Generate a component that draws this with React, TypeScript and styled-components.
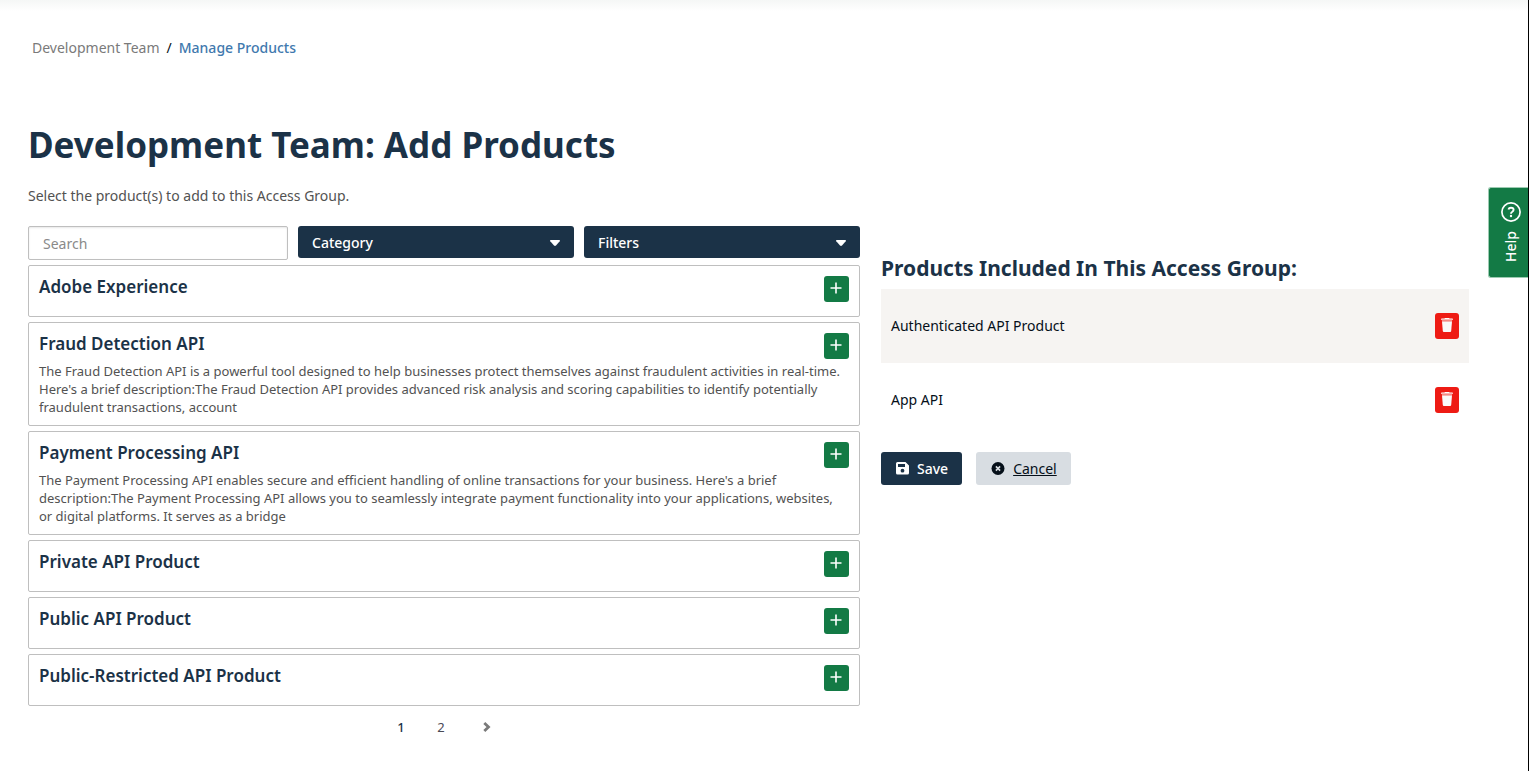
import React from "react";
import styled, { createGlobalStyle } from "styled-components";

const navy = "#1b3247";
const green = "#137a45";

const GlobalStyle = createGlobalStyle`
  *, *::before, *::after { box-sizing: border-box; }
  html, body { margin: 0; background: #fff; }
  body, button, input, select {
    font-family: "Noto Sans", "Open Sans", sans-serif;
    font-size: 14px;
  }
  h1, h2, h3, p, ul, ol { margin: 0; padding: 0; }
  ul, ol { list-style: none; }
  button { cursor: pointer; }
`;

const Page = styled.div`
  position: relative;
  min-height: 100vh;
  padding: 36px 59px 24px 28px;
  border-right: 1px solid #000;
  background: linear-gradient(#f5f7f6, #fff 11px);
  color: #050f19;
`;

const Breadcrumb = styled.ol`
  display: flex;
  gap: 7px;
  padding-left: 4px;
  line-height: 24px;
`;

const CrumbLink = styled.a`
  color: #7a7a7a;
  text-decoration: none;
`;

const CurrentCrumb = styled.span`
  color: #4179ae;
  font-weight: 500;
`;

const Title = styled.h1`
  margin-top: 60px;
  color: ${navy};
  font-size: 35px;
  line-height: 50px;
`;

const Intro = styled.p`
  margin-top: 16px;
  color: #525252;
  line-height: 20px;
`;

const Columns = styled.div`
  display: grid;
  grid-template-columns: minmax(0, 832fr) minmax(0, 588fr);
  gap: 21px;
  align-items: start;
  margin-top: 20px;
`;

const FilterBar = styled.div`
  display: grid;
  grid-template-columns: minmax(0, 260fr) minmax(0, 276fr) minmax(0, 276fr);
  gap: 10px;
  align-items: start;
`;

const SearchInput = styled.input`
  width: 100%;
  height: 34px;
  padding: 0 14px;
  border: 1px solid #bfbfbf;
  border-radius: 2px;
  box-shadow: inset 0 1px 2px #e8e8e8;
  color: #333;
  &::placeholder { color: #8a8a8a; opacity: 1; }
`;

const SelectShell = styled.div`
  position: relative;
`;

const SelectBox = styled.select`
  display: block;
  width: 100%;
  height: 32px;
  padding: 0 14px;
  border: 0;
  border-radius: 3px;
  appearance: none;
  background: ${navy};
  color: #fff;
  font-weight: 500;
`;

const Caret = styled.svg`
  position: absolute;
  top: 14px;
  right: 14px;
  pointer-events: none;
`;

const ProductList = styled.ul`
  display: grid;
  gap: 5px;
  margin-top: 5px;
`;

const ProductCard = styled.li`
  display: grid;
  grid-template-columns: 1fr auto;
  align-content: start;
  align-items: start;
  min-height: 52px;
  padding: 10px 10px 9px;
  border: 1px solid #bfbfbf;
  border-radius: 2px;
`;

const ProductName = styled.h3`
  height: 29px;
  color: ${navy};
  font-size: 17px;
  font-weight: 600;
  line-height: 22px;
`;

const ProductText = styled.p`
  grid-column: 1 / -1;
  color: #525252;
  font-size: 13px;
  line-height: 18px;
`;

const IconButton = styled.button`
  display: flex;
  align-items: center;
  justify-content: center;
  height: 26px;
  border: 0;
  border-radius: 3px;
  color: #fff;
`;

const AddButton = styled(IconButton)`
  width: 25px;
  padding: 0 1px 2px 0;
  background: ${green};
`;

const RemoveButton = styled(IconButton)`
  width: 24px;
  padding: 0 0 2px;
  background: #ee1b14;
`;

const Pager = styled.nav`
  display: flex;
  justify-content: center;
  padding: 9px 0 0 6px;
`;

const PageButton = styled.button<{ $current?: boolean }>`
  display: flex;
  align-items: center;
  justify-content: center;
  width: 40px;
  height: 24px;
  padding: 0;
  border: 0;
  background: none;
  color: ${(p) => (p.$current ? navy : "#4a4a55")};
  font-size: 13px;
  font-weight: ${(p) => (p.$current ? 500 : 400)};
`;

const NextButton = styled(PageButton)`
  width: 52px;
  color: #7a7a7a;
`;

const GroupPanel = styled.section`
  padding-top: 27px;
`;

const GroupTitle = styled.h2`
  color: ${navy};
  font-size: 21px;
  line-height: 30px;
`;

const IncludedList = styled.ul`
  margin-top: 6px;
`;

const IncludedItem = styled.li`
  display: flex;
  align-items: center;
  justify-content: space-between;
  height: 74px;
  padding: 0 10px;
  line-height: 20px;
  &:nth-child(odd) { background: #f6f4f2; }
`;

const Actions = styled.div`
  display: flex;
  gap: 14px;
  margin-top: 15px;
`;

const ActionButton = styled.button<{ $primary?: boolean }>`
  display: flex;
  align-items: center;
  gap: 8px;
  height: 33px;
  padding: 0 14px 0 15px;
  border: 0;
  border-radius: 3px;
  background: ${(p) => (p.$primary ? navy : "#d8dde2")};
  color: ${(p) => (p.$primary ? "#fff" : "#050f19")};
  font-weight: ${(p) => (p.$primary ? 500 : 400)};
  text-decoration: ${(p) => (p.$primary ? "none" : "underline")};
`;

const HelpTab = styled.button`
  position: absolute;
  top: 187px;
  right: 0;
  display: flex;
  flex-direction: column;
  align-items: center;
  justify-content: flex-start;
  gap: 9px;
  width: 40px;
  height: 91px;
  padding: 14px 0 0 5px;
  border: 1px solid #9ccab1;
  border-right: 0;
  border-radius: 3px 0 0 3px;
  background: ${green};
  color: #fff;
  font-weight: 500;
`;

const HelpLabel = styled.span`
  writing-mode: vertical-rl;
  transform: rotate(180deg);
  line-height: 20px;
`;

const PlusIcon = () => (
  <svg width="12" height="12" viewBox="0 0 12 12" aria-hidden="true">
    <path d="M6 .5v11M.5 6h11" stroke="currentColor" strokeWidth="1.6" />
  </svg>
);

const TrashIcon = () => (
  <svg width="12" height="14" viewBox="0 0 12 14" aria-hidden="true">
    <path d="M0 1.2q0-.7.8-.7h2.6L4 0h4l.6.5h2.6q.8 0 .8.7v.6H0z" fill="#fff" />
    <path d="M.8 1.8h10.4l-.2 1.9H1z" fill="#f58a84" />
    <path d="M1 3.6h10L10.2 13q-.1.9-1 .9H2.8q-.9 0-1-.9z" fill="#fafafa" />
  </svg>
);

const SaveIcon = () => (
  <svg width="13" height="13" viewBox="0 0 13 13" aria-hidden="true">
    <path
      fill="currentColor"
      fillRule="evenodd"
      d="M1.5 0h8L13 3.5V11q0 1.500-1.500 1.500h-10Q0 12.500 0 11V1.500Q0 0 1.500 0zM2 2v3h7V2zM6.500 6.800a1.900 1.900 0 1 0 0 3.800 1.900 1.900 0 0 0 0-3.800z"
    />
  </svg>
);

const CancelIcon = () => (
  <svg width="14" height="14" viewBox="0 0 14 14" aria-hidden="true">
    <circle cx="7" cy="6.5" r="6.5" fill="currentColor" />
    <path d="M4.9 4.4l4.2 4.2M9.1 4.4L4.9 8.6" stroke="#d8dde2" strokeWidth="1.6" />
  </svg>
);

const ChevronIcon = () => (
  <svg width="8" height="10" viewBox="0 0 8 10" aria-hidden="true">
    <path d="M1.3 1L5.5 5 1.3 9" fill="none" stroke="currentColor" strokeWidth="2.8" />
  </svg>
);

const HelpIcon = () => (
  <svg width="20" height="20" viewBox="0 0 20 20" fill="none" stroke="currentColor" aria-hidden="true">
    <circle cx="10" cy="10" r="9.1" strokeWidth="1.7" />
    <path d="M7.4 7.5Q7.900 5.700 10 5.700q2.600 0 2.600 2.100 0 1-1.300 1.900Q10 10.500 10 11.700" strokeWidth="1.9" />
    <circle cx="10" cy="14" r="1.2" fill="currentColor" stroke="none" />
  </svg>
);

const products = [
  { name: "Adobe Experience" },
  {
    name: "Fraud Detection API",
    text: "The Fraud Detection API is a powerful tool designed to help businesses protect themselves against fraudulent activities in real-time. Here's a brief description:The Fraud Detection API provides advanced risk analysis and scoring capabilities to identify potentially fraudulent transactions, account",
  },
  {
    name: "Payment Processing API",
    text: "The Payment Processing API enables secure and efficient handling of online transactions for your business. Here's a brief description:The Payment Processing API allows you to seamlessly integrate payment functionality into your applications, websites, or digital platforms. It serves as a bridge",
  },
  { name: "Private API Product" },
  { name: "Public API Product" },
  { name: "Public-Restricted API Product" },
];

const included = ["Authenticated API Product", "App API"];

function FilterSelect({ label }: { label: string }) {
  return (
    <SelectShell>
      <SelectBox aria-label={label} defaultValue="">
        <option value="">{label}</option>
      </SelectBox>
      <Caret width="10" height="6" viewBox="0 0 10 6" aria-hidden="true">
        <path d="M.7 0h8.6q1.1.2.4 1.2L6 5.500q-1 .9-2 0L.3 1.200Q-.4.200.7 0z" fill="#fff" />
      </Caret>
    </SelectShell>
  );
}

export default function App() {
  return (
    <>
      <GlobalStyle />
      <Page>
        <nav aria-label="Breadcrumb">
          <Breadcrumb>
            <li><CrumbLink href="#team">Development Team</CrumbLink></li>
            <li aria-hidden="true">/</li>
            <li><CurrentCrumb aria-current="page">Manage Products</CurrentCrumb></li>
          </Breadcrumb>
        </nav>
        <main>
          <Title>Development Team: Add Products</Title>
          <Intro>Select the product(s) to add to this Access Group.</Intro>
          <Columns>
            <section aria-label="Available products">
              <FilterBar>
                <SearchInput type="text" placeholder="Search" aria-label="Search" />
                <FilterSelect label="Category" />
                <FilterSelect label="Filters" />
              </FilterBar>
              <ProductList>
                {products.map((product) => (
                  <ProductCard key={product.name}>
                    <ProductName>{product.name}</ProductName>
                    <AddButton type="button" aria-label={`Add ${product.name}`}>
                      <PlusIcon />
                    </AddButton>
                    {product.text && <ProductText>{product.text}</ProductText>}
                  </ProductCard>
                ))}
              </ProductList>
              <Pager aria-label="Pages">
                <PageButton type="button" $current aria-current="page">1</PageButton>
                <PageButton type="button">2</PageButton>
                <NextButton type="button" aria-label="Next page"><ChevronIcon /></NextButton>
              </Pager>
            </section>
            <GroupPanel>
              <GroupTitle>Products Included In This Access Group:</GroupTitle>
              <IncludedList>
                {included.map((name) => (
                  <IncludedItem key={name}>
                    <span>{name}</span>
                    <RemoveButton type="button" aria-label={`Remove ${name}`}>
                      <TrashIcon />
                    </RemoveButton>
                  </IncludedItem>
                ))}
              </IncludedList>
              <Actions>
                <ActionButton type="button" $primary><SaveIcon />Save</ActionButton>
                <ActionButton type="button"><CancelIcon />Cancel</ActionButton>
              </Actions>
            </GroupPanel>
          </Columns>
        </main>
        <HelpTab type="button">
          <HelpIcon />
          <HelpLabel>Help</HelpLabel>
        </HelpTab>
      </Page>
    </>
  );
}
